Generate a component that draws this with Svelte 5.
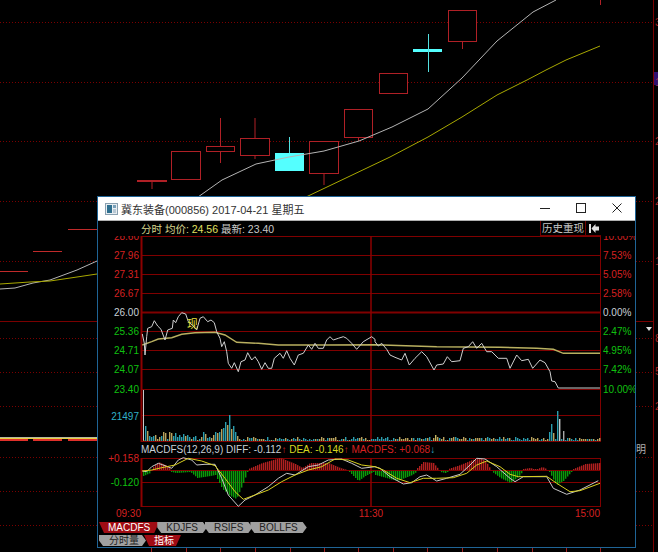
<script lang="ts">
  // ── Background K-line chart ───────────────────────────
  const candles = [
    { x: 137, w: 29, top: 180, bottom: 181, wick: [180, 189] },
    { x: 171, w: 29, top: 151, bottom: 179, wick: null },
    { x: 206, w: 28, top: 146, bottom: 151, wick: [118, 163] },
    { x: 240, w: 29, top: 138, bottom: 155, wick: [118, 159] },
    { x: 309, w: 29, top: 141, bottom: 173, wick: [173, 185] },
    { x: 344, w: 28, top: 109, bottom: 137, wick: [137, 141] },
    { x: 379, w: 28, top: 73, bottom: 93, wick: null },
    { x: 448, w: 28, top: 10, bottom: 41, wick: [41, 49] },
  ];
  const dotted = [22, 82, 141, 201, 261, 338, 372, 406, 457, 491, 525];
  const ticks = [151, 186, 220, 255, 290, 324, 358, 393, 427, 462, 497, 532, 566, 600];
  const bgWhite = '0,289 15,288 33,283 50,280 77,270 97,261 198,197 222,180 256,164 289,157 324,151 359,141 392,127 428,109 462,78 497,41 533,12 556,0';
  const bgYellow = '0,284 30,282 50,281 77,277 97,274 306,197 348,177 390,157 428,137 462,117 497,95 527,80 546,70 566,60 600,46';

  // ── Intraday window data (zoom coordinates, see toLine) ─
  const toLine = (pairs: number[][], ox: number, oy: number) =>
    pairs.map(([x, y]) => `${(ox + x / 3).toFixed(1)},${(oy + y / 3).toFixed(1)}`).join(' ');

  const price =
    toLine([[142,72],[148,100],[150,135],[155,80],[158,55],[170,50],[178,32],[188,48],[198,58],[210,90],[218,60],[232,55],[235,30],[242,38],[250,20],[260,8],[272,12],[280,35],[295,48],[305,60],[315,25],[325,20],[338,35],[348,30],[358,38],[365,65],[375,85],[380,110],[388,95],[395,125],[400,160],[410,175],[418,158],[430,185],[438,155],[450,150],[458,128],[470,150],[480,140],[490,155],[500,178],[510,158],[520,175],[530,175],[538,145],[555,130],[565,145],[575,122],[585,145],[598,165],[610,135],[625,130],[640,105],[650,118],[660,100],[670,115],[685,115],[695,90],[705,80],[715,90],[730,85],[745,80],[755,85],[770,100],[785,118],[805,95],[830,80],[840,88]], 95, 310) + ' ' +
    toLine([[15,95],[25,108],[35,100],[50,118],[60,135],[75,142],[95,150],[105,130],[118,165],[135,145],[155,125],[170,140],[192,180],[200,165],[220,162],[232,140],[245,155],[270,152],[280,115],[295,110],[308,95],[320,115],[335,100],[350,125],[365,125],[385,145],[410,145],[420,175],[440,135],[455,152],[475,148],[488,175],[510,150],[525,158],[540,185],[545,213],[555,215],[565,234],[690,234]], 370, 310);
  const average =
    toLine([[142,105],[170,95],[190,87],[230,83],[260,73],[300,68],[360,67],[390,75],[425,97],[490,100],[550,105],[700,105],[840,104]], 95, 310) + ' ' +
    toLine([[15,104],[200,110],[390,112],[500,115],[550,118],[580,130],[690,130]], 370, 310);
  const diff =
    toLine([[142,108],[155,110],[170,95],[190,85],[210,92],[230,100],[250,75],[265,68],[290,75],[305,90],[330,88],[360,88],[380,130],[400,180],[430,214],[450,195],[480,180],[520,155],[550,130],[575,115],[600,120],[640,95],[670,90],[700,75],[740,72],[770,85],[800,100],[840,95]], 95, 435) + ' ' +
    toLine([[30,100],[60,125],[100,147],[125,143],[150,125],[170,120],[200,138],[230,130],[270,118],[300,90],[320,70],[345,72],[380,95],[420,130],[435,140],[460,125],[490,125],[530,125],[550,160],[590,178],[630,165],[685,137]], 370, 435);
  const dea =
    toLine([[142,108],[170,105],[200,98],[240,90],[280,70],[320,78],[360,92],[390,130],[420,170],[445,193],[480,180],[520,165],[560,140],[600,120],[640,105],[680,95],[720,72],[760,75],[800,90],[840,95]], 95, 435) + ' ' +
    toLine([[40,105],[80,130],[120,143],[160,130],[200,130],[250,128],[290,115],[320,90],[350,78],[390,95],[420,118],[445,125],[530,124],[560,145],[600,170],[630,167],[690,145]], 370, 435);

  const rnd = (i: number) => {
    const s = Math.sin(i * 12.9898) * 43758.5453;
    return s - Math.floor(s);
  };

  // volume bars, about one every 2px; the big ones are read off the picture
  const spikes: Record<number, [number, string]> = {
    145: [15, '#2b9fb0'], 147: [10, '#b9a25c'], 219: [9, '#2b9fb0'], 221: [12, '#b9a25c'], 223: [13, '#2b9fb0'],
    225: [19, '#2b9fb0'], 227: [16, '#b9a25c'], 229: [26, '#2b9fb0'], 231: [12, '#b9a25c'], 233: [15, '#2b9fb0'],
    235: [9, '#2b9fb0'], 237: [5, '#b9a25c'], 435: [6, '#c8b860'], 549: [9, '#2b9fb0'], 551: [17, '#2b9fb0'], 553: [8, '#b9a25c'],
    557: [30, '#2b9fb0'], 559: [22, '#c8c8c8'], 563: [10, '#a8a8a8'],
  };
  const volume = Array.from({ length: 230 }, (_, i) => {
    const x = 143 + i * 2;
    if (spikes[x]) return { x, h: spikes[x][0], color: spikes[x][1] };
    const scale = x < 220 ? 8 : x < 300 ? 4 : x < 545 ? 3 : 2;
    return { x, h: 1 + Math.round(rnd(i) * scale), color: rnd(i + 500) > 0.55 ? '#b9a25c' : '#2b9fb0' };
  }).filter((b) => b.x < 600);

  // MACD histogram envelope: [x, height above the zero line]
  const envelope = [
    [143,-5],[150,-2],[152,2],[158,8],[165,5],[170,1],[171,-1],[176,-2],[190,-1],[197,-7],[210,-5],[215,-4],[222,-18],[230,-25],[236,-28],[243,-12],[247,-1],
    [248,1],[262,7],[280,12],[295,6],[302,2],[310,7],[328,7],[340,2],[347,0],[349,-1],[358,-10],[365,-5],[373,-1],[375,-4],[397,-10],[412,-4],[416,-1],
    [417,2],[423,8],[433,7],[438,1],[440,-1],[445,-2],[447,-1],[448,1],[460,5],[472,10],[480,12],[486,8],[490,1],[492,-1],[500,-7],[510,-12],[518,-6],[522,-1],
    [523,1],[530,2],[533,1],[537,1],[542,3],[546,1],[549,-1],[556,-14],[563,-10],[571,-1],[573,1],[585,6],[600,7],
  ];
  const at = (x: number) => {
    for (let i = 1; i < envelope.length; i++) {
      const [x0, v0] = envelope[i - 1];
      const [x1, v1] = envelope[i];
      if (x <= x1) return v0 + ((v1 - v0) * (x - x0)) / (x1 - x0);
    }
    return 0;
  };
  const histogram = Array.from({ length: 229 }, (_, i) => {
    const x = 143 + i * 2;
    return { x, v: at(x) };
  });

  const rows = [
    { y: 236.5, left: '28.60', right: '10.00%', tone: 'up' },
    { y: 255.5, left: '27.96', right: '7.53%', tone: 'up' },
    { y: 274.5, left: '27.31', right: '5.05%', tone: 'up' },
    { y: 293.5, left: '26.67', right: '2.58%', tone: 'up' },
    { y: 312.5, left: '26.00', right: '0.00%', tone: 'flat', thick: true },
    { y: 331.5, left: '25.36', right: '2.47%', tone: 'down' },
    { y: 350.5, left: '24.71', right: '4.95%', tone: 'down' },
    { y: 369.5, left: '24.07', right: '7.42%', tone: 'down' },
    { y: 389.5, left: '23.40', right: '10.00%', tone: 'down' },
  ];
  const subGrid = [415.5, 441.5, 458.5, 470.5, 482.5, 506.5];
  const tabs = ['MACDFS', 'KDJFS', 'RSIFS', 'BOLLFS'];
</script>

<div class="screen">
  <!-- K-line behind the window -->
  <svg class="backdrop" width="658" height="552" viewBox="0 0 658 552">
    {#each dotted as y}
      <line x1="0" x2="653" y1={y + 0.5} y2={y + 0.5} class="dot" />
    {/each}
    <line x1="0" x2="653" y1="321.5" y2="321.5" stroke="#7a0000" />
    <line x1="653.5" x2="653.5" y1="0" y2="552" stroke="#7a0000" />
    {#each ticks as x}
      <line x1={x + 0.5} x2={x + 0.5} y1="548" y2="552" stroke="#a02020" />
    {/each}

    {#each candles as c}
      <rect x={c.x + 0.5} y={c.top + 0.5} width={c.w} height={c.bottom - c.top} fill="#000" stroke="#b02026" />
      {#if c.wick}
        {#if c.wick[0] < c.top}
          <line x1={c.x + c.w / 2 + 0.5} x2={c.x + c.w / 2 + 0.5} y1={c.wick[0]} y2={c.top} stroke="#b02026" />
        {/if}
        <line x1={c.x + c.w / 2 + 0.5} x2={c.x + c.w / 2 + 0.5} y1={Math.max(c.bottom, c.wick[0])} y2={c.wick[1]} stroke="#b02026" />
      {/if}
    {/each}
    <rect x="275" y="153" width="29" height="18" fill="#54ffff" />
    <line x1="289.5" x2="289.5" y1="137" y2="153" stroke="#54e0e0" />
    <rect x="413" y="49" width="29" height="3" fill="#54ffff" />
    <line x1="428.5" x2="428.5" y1="34" y2="72" stroke="#54e0e0" />
    <line x1="600.5" x2="600.5" y1="0" y2="5" stroke="#b02026" />
    <line x1="68" x2="97" y1="229.5" y2="229.5" stroke="#c02a2a" />
    <line x1="33" x2="62" y1="251.5" y2="251.5" stroke="#c02a2a" />
    <line x1="0" x2="28" y1="271.5" y2="271.5" stroke="#c02a2a" />

    <polyline points={bgWhite} class="line" stroke="#b4b4b4" />
    <polyline points={bgYellow} class="line" stroke="#a8a800" />

    <!-- flat limit-down candles left of the window -->
    <rect x="0" y="439" width="28" height="2" fill="#e0302a" />
    <rect x="33" y="439" width="29" height="2" fill="#e0302a" />
    <rect x="68" y="439" width="29" height="2" fill="#e0302a" />
    <line x1="0" x2="97" y1="438.5" y2="438.5" stroke="#e8d040" />
    <line x1="0" x2="97" y1="437.5" y2="437.5" stroke="#b8b8a0" />

    <polygon points="646,327 652,327 649,331" fill="#e0e0e0" />
    <rect x="654" y="72" width="4" height="13" fill="#301070" />
    <text x="655" y="26" class="side">3</text>
    <text x="655" y="86" class="side purple">1</text>
    <text x="655" y="145" class="side">2</text>
    <text x="655" y="205" class="side">2</text>
    <text x="655" y="265" class="side">1</text>
    <text x="655" y="342" class="side">8</text>
    <text x="655" y="375" class="side">5</text>
    <text x="655" y="410" class="side">2</text>
    <text x="636" y="453" class="ming">明</text>
  </svg>

  <!-- Intraday window -->
  <section class="window">
    <header class="titlebar">
      <svg class="app-icon" width="13" height="12" viewBox="0 0 13 12">
        <rect x="0.5" y="0.5" width="12" height="11" fill="#e8eef2" stroke="#8aa0b0" />
        <rect x="2" y="2" width="5" height="8" fill="#2f6f8f" />
        <rect x="8" y="2" width="3" height="3" fill="#7aa0b8" />
        <rect x="8" y="6" width="3" height="4" fill="#b8c8d4" />
      </svg>
      <span class="title">冀东装备(000856) 2017-04-21 星期五</span>
      <div class="controls">
        <svg width="36" height="23" viewBox="0 0 36 23"><line x1="13" x2="23" y1="11.5" y2="11.5" stroke="#222" /></svg>
        <svg width="36" height="23" viewBox="0 0 36 23"><rect x="13.5" y="6.5" width="9" height="9" fill="none" stroke="#222" /></svg>
        <svg width="36" height="23" viewBox="0 0 36 23"><path d="M13.5 6.5l9 9M22.5 6.5l-9 9" fill="none" stroke="#222" /></svg>
      </div>
    </header>

    <div class="info">
      <span class="info-text">
        <span class="pale">分时 均价:</span> <span class="yellow">24.56</span> <span class="grey">最新: 23.40</span>
      </span>
      <div class="replay">
        <span class="replay-label">历史重现</span>
        <span class="replay-arrow">
          <svg width="10" height="9" viewBox="0 0 10 9"><path d="M0 0h2v9H0zM2.5 4.5L6.5 0v2.5H10v4H6.5V9z" fill="#e0e0e0" /></svg>
        </span>
      </div>
    </div>

    <svg class="chart" width="537" height="286" viewBox="98 236 537 286">
      {#each rows as r}
        <line x1="141" x2="601" y1={r.y} y2={r.y} stroke="#800000" stroke-width={r.thick ? 2 : 1} />
      {/each}
      {#each subGrid as y}
        <line x1="141" x2="601" y1={y} y2={y} stroke="#800000" />
      {/each}
      <line x1="141.5" x2="141.5" y1="236" y2="442" stroke="#8c0000" stroke-width="2" />
      <line x1="371" x2="371" y1="236" y2="442" stroke="#8c0000" stroke-width="1.5" />
      <line x1="600.5" x2="600.5" y1="236" y2="442" stroke="#800000" />
      <line x1="141.5" x2="141.5" y1="458" y2="507" stroke="#8c0000" stroke-width="2" />
      <line x1="371" x2="371" y1="458" y2="507" stroke="#8c0000" stroke-width="1.5" />
      <line x1="600.5" x2="600.5" y1="458" y2="507" stroke="#800000" />

      <line x1="143.5" x2="143.5" y1="390" y2="441" stroke="#c8c8c8" />
      {#each volume as b}
        <rect x={b.x} y={441 - b.h} width="1.4" height={b.h} fill={b.color} />
      {/each}

      <polyline points={average} class="line" stroke="#b9b060" stroke-width="1.4" />
      <polyline points={price} class="line" stroke="#cfcfcf" />
      <text x="187" y="328" class="marker">现</text>

      {#each histogram as h}
        {#if h.v > 0.4}
          <rect x={h.x} y={470 - h.v} width="1.4" height={h.v} fill="#b02020" />
        {:else if h.v < -0.4}
          <rect x={h.x} y="471" width="1.4" height={-h.v} fill="#0a9a0a" />
        {/if}
      {/each}
      <polyline points={diff} class="line" stroke="#c8c8c8" />
      <polyline points={dea} class="line" stroke="#d8d020" />

      {#each rows as r}
        <text x="139" y={r.y + 3.5} text-anchor="end" class="num {r.tone}">{r.left}</text>
        <text x="603" y={r.y + 3.5} class="num {r.tone}">{r.right}</text>
      {/each}
      <text x="139" y="419.5" text-anchor="end" class="num teal">21497</text>
      <text x="141" y="453" class="num">
        <tspan class="flat">MACDFS(12,26,9) DIFF: -0.112</tspan><tspan class="up">↑</tspan>
        <tspan class="amber">DEA: -0.146</tspan><tspan class="up">↑</tspan>
        <tspan class="up">MACDFS: +0.068</tspan><tspan class="teal">↓</tspan>
      </text>
      <text x="139" y="462" text-anchor="end" class="num up">+0.158</text>
      <text x="139" y="486" text-anchor="end" class="num down">-0.120</text>
      <text x="141" y="517" text-anchor="end" class="num up">09:30</text>
      <text x="371" y="517" text-anchor="middle" class="num up">11:30</text>
      <text x="600" y="517" text-anchor="end" class="num up">15:00</text>
    </svg>

    <nav class="tabs">
      {#each tabs as t, i}
        <span class="tab" class:active={i === 0}>{t}</span>
      {/each}
    </nav>
    <nav class="tabs second">
      <span class="tab cjk">分时量</span>
      <span class="tab cjk active">指标</span>
    </nav>
  </section>
</div>

<style>
  :global(body) {
    margin: 0;
    background: #000;
  }

  .screen {
    position: relative;
    width: 658px;
    height: 552px;
    background: #000;
    overflow: hidden;
    font-family: "Liberation Sans", "Noto Sans CJK SC", sans-serif;
  }

  .backdrop {
    position: absolute;
    inset: 0;
  }

  .dot {
    stroke: #7a0000;
    stroke-dasharray: 1 2;
  }

  .line {
    fill: none;
  }

  .side {
    font-size: 11px;
    fill: #a82020;
  }

  .side.purple {
    fill: #a03060;
  }

  .ming {
    font-size: 10px;
    fill: #b0b0b0;
  }

  /* ── Window ───────────────────────────────────────────── */
  .window {
    position: absolute;
    left: 97px;
    top: 196px;
    width: 539px;
    height: 352px;
    box-sizing: border-box;
    border: 1px solid #1f6496;
    background: #000;
    display: flex;
    flex-direction: column;
  }

  .titlebar {
    height: 23px;
    flex: none;
    background: #fff;
    border-bottom: 1px solid #b0b0b0;
    display: flex;
    align-items: center;
    padding-left: 7px;
    gap: 3px;
  }

  .title {
    font-size: 11px;
    color: #333;
    white-space: nowrap;
  }

  .controls {
    margin-left: auto;
    display: flex;
    margin-right: 0;
  }

  .info {
    height: 15px;
    flex: none;
    display: flex;
    align-items: center;
    justify-content: space-between;
    padding: 0 34px 0 43px;
    font-size: 10.5px;
  }

  .info-text {
    white-space: nowrap;
  }

  .pale { color: #d8d890; }
  .yellow { color: #e0e060; }
  .grey { color: #c8c8c8; }

  .replay {
    display: flex;
    height: 15px;
    border-left: 1px solid #700000;
    border-bottom: 1px solid #700000;
    box-sizing: border-box;
  }

  .replay-label {
    width: 44px;
    color: #c8c8c8;
    text-align: center;
    font-size: 10.5px;
    line-height: 15px;
    white-space: nowrap;
  }

  .replay-arrow {
    width: 15px;
    border-left: 1px solid #700000;
    display: flex;
    align-items: center;
    justify-content: center;
  }

  .chart {
    display: block;
    flex: none;
  }

  .num {
    font-size: 10px;
    font-family: "Liberation Sans", sans-serif;
  }

  .up { fill: #d62020; }
  .down { fill: #10c010; }
  .flat { fill: #c8d0d8; }
  .teal { fill: #30b0c8; }
  .amber { fill: #d8d820; }

  .marker {
    font-size: 11px;
    fill: #e8e040;
    font-family: "Noto Sans CJK SC", sans-serif;
  }

  /* ── Tabs ─────────────────────────────────────────────── */
  .tabs {
    display: flex;
    height: 11px;
    padding-left: 1px;
    flex: none;
  }

  .tabs.second {
    margin-top: 2px;
  }

  .tab {
    background: #a0a0a0;
    color: #222;
    font-size: 10px;
    line-height: 11px;
    padding: 0 9px;
    margin-right: -2px;
    white-space: nowrap;
    clip-path: polygon(0 0, calc(100% - 4px) 0, 100% 50%, calc(100% - 4px) 100%, 4px 100%, 0 50%);
  }

  .tab.active {
    background: #a00c14;
    color: #fff;
    clip-path: polygon(0 0, 100% 0, calc(100% - 5px) 100%, 5px 100%);
  }

  .tab.cjk {
    padding: 0 7px 0 10px;
  }
</style>
